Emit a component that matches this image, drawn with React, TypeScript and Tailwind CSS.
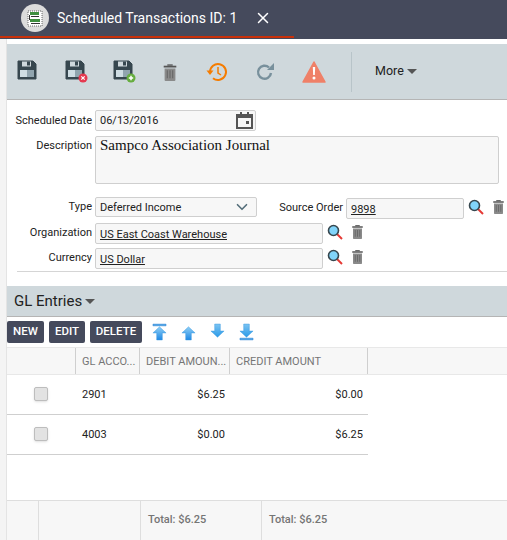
import { X, ChevronDown } from 'lucide-react';

const Floppy = ({ badge }: { badge?: 'x' | 'plus' }) => (
  <svg width="24" height="24" viewBox="0 0 24 24">
    <path d="M1 1h15l3 3v15H1z" fill="#37474f" stroke="#37474f" strokeWidth="1" strokeLinejoin="round" />
    <path d="M5 1.500h9v5H5z" fill="#cfd8dc" />
    <path d="M10 1.500h3v4h-3z" fill="#37474f" />
    <path d="M3 10h7v7H3z" fill="#cfdde3" />
    <path d="M10 10h7v7h-7z" fill="#90a4ae" />
    {badge === 'x' && (
      <g>
        <circle cx="18" cy="18" r="4.500" fill="#e53950" />
        <path d="M16.300 16.300l3.400 3.400M19.700 16.300l-3.400 3.400" stroke="#fff" strokeWidth="1.200" />
      </g>
    )}
    {badge === 'plus' && (
      <g>
        <circle cx="18" cy="18" r="4.500" fill="#66ad3f" />
        <path d="M15.800 18h4.400M18 15.800v4.400" stroke="#fff" strokeWidth="1.500" />
      </g>
    )}
  </svg>
);

const Trash = ({ size = 18 }: { size?: number }) => (
  <svg width={size} height={size} viewBox="0 0 18 20">
    <path d="M2 3h14v2H2z" fill="#555" />
    <path d="M6 1.500h6V3H6z" fill="#555" />
    <path d="M3 6h12v13a1 1 0 0 1-1 1H4a1 1 0 0 1-1-1z" fill="#8a8a8a" />
    <path d="M6 8v9M9 8v9M12 8v9" stroke="#666" strokeWidth="1.200" />
  </svg>
);

const Magnifier = () => (
  <svg width="16" height="16" viewBox="0 0 16 16">
    <path d="M10 10l5 5" stroke="#e53935" strokeWidth="2" />
    <circle cx="6.500" cy="6.500" r="5" fill="#81d4fa" stroke="#37474f" strokeWidth="1.600" />
  </svg>
);

const Arrow = ({ up, bar, id }: { up?: boolean; bar?: boolean; id: string }) => (
  <svg width="15" height="18" viewBox="0 0 16 18">
    <defs>
      <linearGradient id={id} x1="0" y1="0" x2="0" y2="1">
        <stop offset="0" stopColor={up ? '#90d0f5' : '#2b9be8'} />
        <stop offset="1" stopColor={up ? '#1e88e5' : '#7cc4f2'} />
      </linearGradient>
    </defs>
    <g transform={up ? undefined : 'rotate(180 8 9)'}>
      {bar && <path d="M1 0.500h14v2H1z" fill="#5aa9e6" stroke="#1976d2" strokeWidth="0.400" />}
      <path d="M8 3.500L1 10h4v7.500h6V10h4z" fill={`url(#${id})`} stroke="#3d9ae0" strokeWidth="0.500" />
    </g>
  </svg>
);

const Field = ({ value, className }: { value: string; className: string }) => (
  <div className={`h-[21px] border border-[#cfcfcf] rounded-[2px] bg-[#f7f7f7] pl-1 text-[11px] leading-[22px] text-[#222] ${className}`}>
    <span className="underline">{value}</span>
  </div>
);

const Label = ({ children, className = '' }: { children: string; className?: string }) => (
  <div className={`text-[11px] text-[#222] text-right whitespace-nowrap ${className}`}>{children}</div>
);

const rows = [
  { account: '2901', debit: '$6.25', credit: '$0.00' },
  { account: '4003', debit: '$0.00', credit: '$6.25' },
];

export default function App() {
  return (
    <div className="w-[507px] h-[540px] overflow-hidden bg-white font-['Roboto',sans-serif] flex flex-col">
      <div className="h-[39px] shrink-0 bg-[#454a5c]">
        <div className="w-[294px] h-[38px] border-b-2 border-[#c9300a] flex items-center pl-[21px]">
          <div className="w-7 h-7 rounded-full bg-[#dcdcdc] flex items-center justify-center">
            <svg width="16" height="17" viewBox="0 0 16 17">
              <path d="M1 1h14v15H1z" fill="#fff" stroke="#444" strokeWidth="0.800" strokeDasharray="1 1" />
              <path d="M3 2h9v3H3zM3 9h10v3H3z" fill="#3f8f3f" />
              <path d="M2 5h1v5H2zM4 6h8v1H4zM4 13h9v1H4z" fill="#333" />
            </svg>
          </div>
          <span className="ml-2 text-[14px] text-white">Scheduled Transactions ID: 1</span>
          <X className="ml-[17px] text-white" size={18} strokeWidth={2} />
        </div>
      </div>

      <div className="flex-1 flex min-h-0">
        <div className="w-[7px] shrink-0 bg-[#f4f4f4] border-r border-[#e4e4e4]" />
        <div className="flex-1 min-w-0 flex flex-col">
          <div className="mt-[5px] h-[56px] shrink-0 bg-[#cfd8dc] border-b border-[#b5b5b5] flex items-center pl-[10px]">
            <div className="w-[48px]"><Floppy /></div>
            <div className="w-[48px]"><Floppy badge="x" /></div>
            <div className="w-[48px]"><Floppy badge="plus" /></div>
            <div className="w-[45px]"><Trash /></div>
            <div className="w-[49px]">
              <svg width="22" height="22" viewBox="0 0 22 22" fill="none" stroke="#f57c00" strokeWidth="2">
                <path d="M4 11a8 8 0 1 1 3 6.200" />
                <path d="M0.500 9.500h7L4 14z" fill="#f57c00" stroke="none" />
                <path d="M12 6v6l3 2" strokeWidth="1.500" />
              </svg>
            </div>
            <div className="w-[47px]">
              <svg width="20" height="20" viewBox="0 0 20 20" fill="none" stroke="#78909c" strokeWidth="2.400">
                <path d="M16 11a6.500 6.500 0 1 1-2-5.500" />
                <path d="M12 8h7V1z" fill="#78909c" stroke="none" />
              </svg>
            </div>
            <div className="w-[34px]">
              <svg width="24" height="22" viewBox="0 0 24 22">
                <path d="M12 1L23 21H1z" fill="#ef8068" stroke="#ef8068" strokeWidth="1.500" strokeLinejoin="round" />
                <path d="M10.800 6h2.400l-.4 8h-1.600z" fill="#fff" />
                <circle cx="12" cy="17" r="1.500" fill="#fff" />
              </svg>
            </div>
            <div className="ml-[15px] w-px h-[40px] bg-[#b8c4c9]" />
            <div className="ml-[23px] flex items-center gap-[3px] text-[12.500px] text-[#222]">
              More
              <span className="w-0 h-0 border-x-[5px] border-x-transparent border-t-[5px] border-t-[#555]" />
            </div>
          </div>

          <div className="shrink-0 h-[186px] pt-[10px]">
            <div className="flex items-start">
              <Label className="w-[85px] mt-[3px]">Scheduled Date</Label>
              <div className="ml-[3px] w-[161px] h-[21px] border border-[#cfcfcf] rounded-[2px] bg-[#f7f7f7] pl-1 pr-[2px] text-[11px] text-[#222] flex justify-between items-center">
                <span className="mt-[2px]">06/13/2016</span>
                <svg width="17" height="17" viewBox="0 0 17 17">
                  <path d="M1 3h15v13H1z" fill="none" stroke="#555" strokeWidth="2" />
                  <path d="M1 3h15v3H1zM4 0h2v3H4zM11 0h2v3h-2zM10 9h3v3h-3z" fill="#555" />
                </svg>
              </div>
            </div>
            <div className="flex items-start mt-[5px]">
              <Label className="w-[85px] mt-[2px]">Description</Label>
              <div className="ml-[3px] w-[404px] h-[48px] border border-[#cfcfcf] rounded-[2px] bg-[#f7f7f7] pl-1 font-['Liberation_Serif',serif] text-[15px] leading-[17px] text-[#111]">
                Sampco Association Journal
              </div>
            </div>
            <div className="flex items-start mt-[13px]">
              <Label className="w-[85px] mt-[2px]">Type</Label>
              <div className="ml-[3px] w-[162px] h-[20px] border border-[#cfcfcf] rounded-[2px] bg-[#f7f7f7] pl-1 pr-[5px] text-[11px] text-[#222] flex justify-between items-center">
                <span className="mt-[2px]">Deferred Income</span>
                <ChevronDown size={18} className="text-[#546e7a]" strokeWidth={2.200} />
              </div>
              <Label className="ml-[21px] w-[65px] mt-[3px]">Source Order</Label>
              <Field value="9898" className="ml-[3px] mt-[1px] w-[118px]" />
              <div className="ml-[4px] mt-[2px]"><Magnifier /></div>
              <div className="ml-[7px] mt-[2px]"><Trash size={15} /></div>
            </div>
            <div className="flex items-start mt-[4px]">
              <Label className="w-[85px] mt-[2px]">Organization</Label>
              <Field value="US East Coast Warehouse" className="ml-[3px] w-[228px]" />
              <div className="ml-[4px] mt-[1px]"><Magnifier /></div>
              <div className="ml-[7px] mt-[1px]"><Trash size={15} /></div>
            </div>
            <div className="flex items-start mt-[4px]">
              <Label className="w-[85px] mt-[2px]">Currency</Label>
              <Field value="US Dollar" className="ml-[3px] w-[228px]" />
              <div className="ml-[4px] mt-[1px]"><Magnifier /></div>
              <div className="ml-[7px] mt-[1px]"><Trash size={15} /></div>
            </div>
            <div className="ml-[10px] mt-[2px] h-px bg-[#d5d5d5]" />
          </div>

          <div className="h-[31px] shrink-0 bg-[#cfd8dc] border-b border-[#b5b5b5] flex items-center pl-[7px] gap-[3px] text-[15px] text-[#222]">
            GL Entries
            <span className="w-0 h-0 border-x-[5px] border-x-transparent border-t-[5px] border-t-[#555]" />
          </div>

          <div className="h-[30px] shrink-0 flex items-center gap-[5px] text-[11.500px] font-medium text-white">
            <div className="w-[37px] h-[22px] rounded-[2px] bg-[#454a5c] flex items-center justify-center">NEW</div>
            <div className="w-[36px] h-[22px] rounded-[2px] bg-[#454a5c] flex items-center justify-center">EDIT</div>
            <div className="w-[52px] h-[22px] rounded-[2px] bg-[#454a5c] flex items-center justify-center">DELETE</div>
            <div className="ml-[5px] flex gap-[14px]">
              <Arrow up bar id="a1" />
              <Arrow up id="a2" />
              <Arrow id="a3" />
              <Arrow bar id="a4" />
            </div>
          </div>

          <div className="h-[28px] shrink-0 bg-[#f7f7f7] border-t border-b border-[#e8e8e8] flex text-[11px] text-[#757575] whitespace-nowrap">
            <div className="w-[69px] border-r border-[#cfcfcf]" />
            <div className="w-[64px] border-r border-[#cfcfcf] pl-[6px] leading-[27px]">GL ACCO...</div>
            <div className="w-[90px] border-r border-[#cfcfcf] pl-[6px] leading-[27px]">DEBIT AMOUN...</div>
            <div className="w-[138px] border-r border-[#cfcfcf] pl-[6px] leading-[27px]">CREDIT AMOUNT</div>
          </div>

          <div className="flex-1 min-h-0 flex flex-col">
            {rows.map((row) => (
              <div key={row.account} className="h-[40px] w-[361px] shrink-0 border-b border-[#cfcfcf] flex items-center text-[11px] text-[#222]">
                <div className="w-[68px] flex justify-center">
                  <div className="w-[14px] h-[14px] -mt-[2px] rounded-[2px] bg-[#e2e2e2] border border-[#bdbdbd] shadow-sm" />
                </div>
                <div className="w-[64px] pl-[7px] pt-[1px]">{row.account}</div>
                <div className="w-[86px] text-right pt-[1px]">{row.debit}</div>
                <div className="w-[138px] text-right pt-[1px]">{row.credit}</div>
              </div>
            ))}
          </div>

          <div className="h-[40px] shrink-0 bg-[#f7f7f7] border-t border-[#dedede] flex text-[11px] font-medium text-[#757575]">
            <div className="w-[32px] border-r border-[#dedede]" />
            <div className="w-[102px] border-r border-[#dedede]" />
            <div className="w-[121px] border-r border-[#dedede] pl-[7px] leading-[38px]">Total: $6.25</div>
            <div className="pl-[7px] leading-[38px]">Total: $6.25</div>
          </div>
        </div>
      </div>
    </div>
  );
}
